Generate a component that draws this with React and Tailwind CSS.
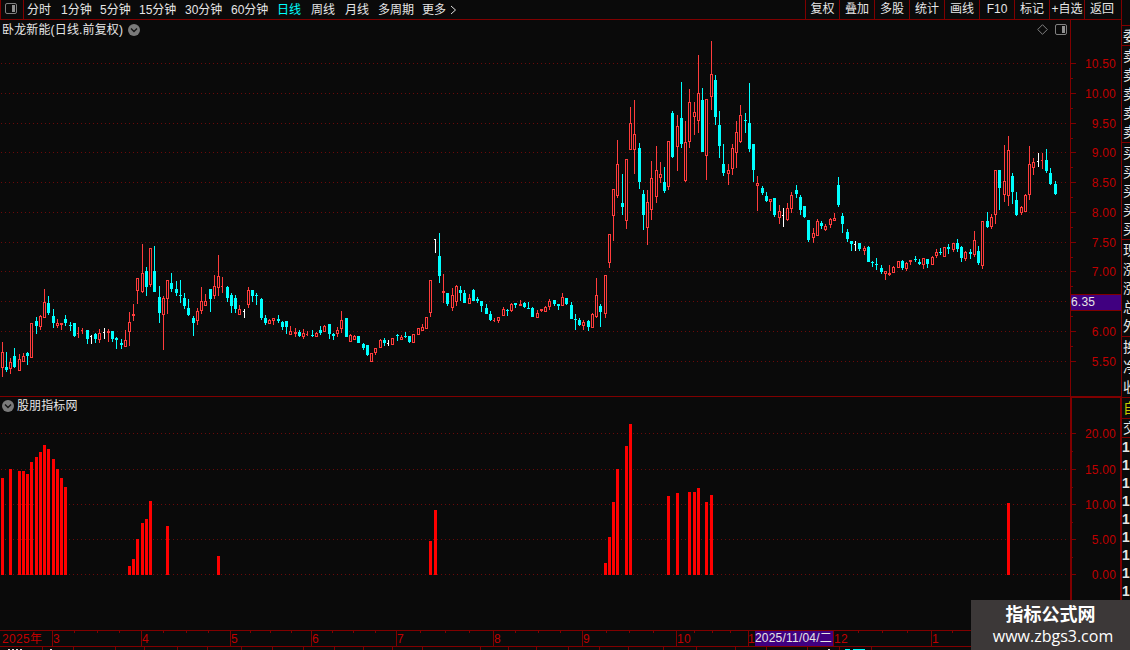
import React from 'react';
import clsx from 'clsx';

const LINE = '#800000';
const LABEL = '#c00000';
const COLORS = { r: '#ff3c3c', c: '#00ffff', w: '#ffffff' };

// x, wick top, wick bottom, body top, body bottom, colour
const CANDLES = `
2 342 377 352 368 r|6 352 372 367 370 c|10 358 374 362 369 r|14 348 368 356 367 c|19 354 371 359 371 r
23 353 362 356 362 r|27 352 365 353 356 c|31 323 358 323 358 r|36 317 334 321 326 c|40 315 330 316 327 r
44 289 318 302 318 r|48 296 315 303 313 c|53 309 328 316 323 c|57 319 328 323 326 r|61 323 330 323 325 r
65 315 326 319 323 c|70 322 331 325 326 c|74 323 337 323 336 c|78 327 338 333 334 r|82 328 334 330 331 r
87 330 344 330 339 c|91 335 344 336 337 w|95 333 343 334 339 c|99 329 343 333 340 r|104 328 339 332 333 w
108 329 342 331 333 r|112 331 342 331 339 c|116 337 349 338 340 c|121 339 349 343 345 c|125 330 347 340 347 r
129 312 346 322 332 r|133 304 321 314 316 r|137 278 304 278 291 r|142 244 293 273 292 r|146 267 296 271 287 c
150 248 287 248 285 r|154 246 292 271 292 c|159 286 323 297 313 c|163 296 350 298 315 r|167 280 314 280 299 r
171 273 292 283 289 c|176 281 296 289 293 c|180 280 303 295 296 c|184 293 309 298 306 c|188 299 316 308 315 c
193 316 336 318 323 c|197 308 325 311 321 r|201 287 314 301 311 r|205 294 306 301 306 r|210 289 312 289 299 c
214 275 299 286 296 r|218 255 296 276 288 r|222 277 293 286 287 r|227 286 302 287 298 c|231 293 313 295 306 c
235 295 313 298 309 c|239 305 315 309 315 r|244 309 318 311 312 w|248 287 308 290 305 r|252 290 302 290 296 c
256 293 305 295 296 c|261 298 320 299 318 c|265 315 325 318 323 c|269 319 324 320 324 r|273 318 325 318 321 r
278 315 323 319 321 c|282 321 330 322 327 c|286 321 334 321 327 c|290 326 335 331 335 r|295 328 337 332 334 r
299 330 337 332 336 c|303 329 339 333 337 r|307 331 336 334 335 r|312 330 337 335 336 c|316 332 337 333 337 r
320 326 335 330 333 c|324 325 332 326 332 r|329 324 339 324 334 c|333 333 340 334 336 c|337 327 337 330 334 r
341 311 333 320 329 r|346 318 337 318 337 c|350 334 342 335 342 r|354 335 340 336 340 r|358 336 343 336 343 c
363 343 350 344 348 c|367 345 356 345 355 c|371 353 362 353 362 r|375 348 355 348 353 r|380 339 348 340 348 r
384 338 346 340 343 c|388 340 346 343 344 w|392 338 345 338 345 r|397 334 341 335 336 c|401 335 340 337 340 r
405 332 338 336 337 c|409 336 343 336 342 c|413 334 343 334 343 r|418 328 335 328 335 r|422 324 331 327 331 r
426 317 329 317 329 r|430 280 317 280 313 r|435 239 253 239 240 w|439 233 283 256 276 c|443 274 303 291 293 r
447 293 306 293 304 c|452 288 311 295 308 r|456 285 306 286 302 r|460 286 301 290 293 c|464 290 303 293 303 c
469 294 304 298 304 r|473 289 301 290 301 c|477 297 303 299 301 c|481 301 312 301 306 c|486 304 314 308 314 c
490 311 321 314 320 c|494 318 322 320 321 r|498 317 323 317 321 r|503 307 316 309 316 r|507 309 316 310 311 c
511 303 312 304 311 r|515 303 308 303 305 c|520 300 306 304 306 r|524 302 308 303 307 c|528 302 309 308 309 c
532 307 317 308 317 c|537 310 318 313 318 r|541 309 312 309 311 r|545 306 312 307 312 r|549 299 310 301 307 r
554 300 306 300 304 c|558 304 310 304 306 c|562 293 306 297 306 r|566 298 305 298 304 c|571 302 319 305 319 c
575 314 330 319 320 c|579 318 326 320 325 c|583 320 330 322 326 r|588 320 331 321 327 c|592 313 328 314 328 r
596 278 318 295 317 r|600 304 327 306 312 c|605 275 318 275 314 r|609 234 268 234 263 r|613 189 241 189 216 r
617 140 198 164 196 r|622 174 215 203 207 c|626 159 229 159 221 r|630 107 150 123 150 r|634 100 174 134 150 r
639 143 189 148 182 c|643 190 230 194 215 c|647 190 245 202 228 r|651 161 220 178 210 r|656 146 203 170 197 r
660 162 183 174 178 r|664 167 193 182 191 c|668 141 190 141 187 r|672 111 158 113 157 c|677 115 171 126 147 r
681 82 148 118 144 c|685 121 182 142 181 r|689 89 148 102 142 r|694 102 135 112 117 r|698 55 133 93 121 r
702 88 152 100 152 c|706 99 180 99 156 r|711 41 110 74 97 r|715 75 125 80 117 c|719 111 158 125 146 c
723 144 176 164 173 c|728 164 185 170 174 r|732 144 175 148 169 r|736 121 168 132 153 r|740 105 143 115 142 r
745 113 133 120 121 c|749 83 152 123 149 c|753 144 182 144 170 c|757 176 211 183 186 r|762 186 195 188 193 c
766 192 202 196 201 c|770 199 211 199 202 r|774 198 217 198 215 c|779 205 224 211 218 r|783 208 227 215 216 w
787 203 221 208 220 r|791 192 213 195 209 r|796 185 198 190 194 c|800 195 215 197 210 c|804 206 218 206 217 c
808 220 242 220 240 c|813 228 243 233 238 r|817 219 236 221 236 r|821 221 229 223 226 c|825 224 231 226 230 r
830 218 228 219 225 r|834 213 221 218 221 r|838 177 207 185 205 c|842 213 233 216 224 c|847 229 242 232 239 c
851 241 251 241 244 c|855 241 251 244 245 w|859 243 251 243 249 c|864 246 255 248 251 r|868 246 262 247 262 c
872 261 267 262 263 c|876 258 270 264 265 c|881 265 274 268 272 c|885 271 280 271 274 r|889 265 276 273 275 r
893 266 273 267 273 r|898 261 268 261 268 r|902 260 270 261 268 c|906 262 271 263 269 r|910 260 265 260 262 r
915 256 262 259 260 c|919 259 265 262 264 c|923 258 269 258 265 r|927 259 268 259 264 c|932 256 265 257 265 r
936 249 258 252 256 r|940 248 255 252 253 c|944 247 257 247 257 r|948 244 254 247 249 c|953 243 252 243 250 r
957 239 252 243 249 c|961 246 262 247 258 c|965 251 261 252 259 r|970 249 259 252 254 c|974 231 257 240 255 r
978 246 265 251 263 c|982 221 269 221 266 r|987 212 228 221 227 c|991 214 229 217 227 r|995 170 224 170 215 r
999 170 210 170 188 c|1004 145 202 181 195 r|1008 136 206 150 196 r|1012 173 204 176 192 c|1016 192 216 200 215 c
1021 206 215 207 213 r|1025 194 212 195 212 r|1029 146 200 164 195 r|1033 158 175 162 168 r|1038 153 167 161 162 w
1042 153 169 160 161 r|1046 149 173 160 171 c|1050 168 185 173 184 c|1055 181 195 184 194 c
`.trim().split(/[|\n]/).map((row) => {
  const [x, high, low, top, bottom, kind] = row.split(' ');
  return { x: +x, high: +high, low: +low, top: +top, bottom: +bottom, kind };
});

const BARS = [
  [2, 478], [10, 469], [19, 471], [23, 471], [27, 474], [31, 462], [36, 457], [40, 452], [44, 445], [48, 449],
  [53, 459], [57, 469], [61, 478], [65, 487], [129, 566], [133, 559], [137, 539], [142, 523], [146, 519],
  [150, 501], [167, 526], [218, 556], [430, 541], [435, 510], [605, 563], [609, 537], [613, 502], [617, 469],
  [626, 446], [630, 424], [668, 496], [677, 493], [689, 492], [694, 492], [698, 488], [706, 502], [711, 495],
  [1008, 503],
];

const PRICES = [
  [63, '10.50'], [93, '10.00'], [123, '9.50'], [152, '9.00'], [182, '8.50'], [212, '8.00'],
  [242, '7.50'], [271, '7.00'], [301, null], [331, '6.00'], [361, '5.50'],
];
const VALUES = [[433, '20.00'], [469, '15.00'], [504, '10.00'], [539, '5.00'], [574, '0.00']];

// the November label is mostly hidden by the cursor date, only its first digit shows
const MONTHS = [
  [52, '3'], [141, '4'], [230, '5'], [311, '6'], [396, '7'], [493, '8'], [582, '9'], [676, '10'],
  [748, '1'], [833, '12'], [931, '1'],
];
const WEEKS = [
  74, 97, 119, 163, 186, 208, 250, 270, 291, 332, 353, 375, 420, 445, 469, 515, 538, 560, 606, 629, 653,
  694, 712, 730, 858, 882, 907, 952,
];
const FOOTER = [
  42, 73, 115, 144, 177, 207, 241, 272, 303, 334, 363, 392, 422, 480, 508, 536, 568, 599, 628, 663, 696,
  735, 766, 807, 839, 871,
];

const PERIODS = [
  ['分时', 'w-[34px]'], ['1分钟', 'w-[39px]'], ['5分钟', 'w-[39px]'], ['15分钟', 'w-[46px]'],
  ['30分钟', 'w-[46px]'], ['60分钟', 'w-[46px]'], ['日线', 'w-[34px]'], ['周线', 'w-[34px]'],
  ['月线', 'w-[33px]'], ['多周期', 'w-[44px]'], ['更多', 'w-[28px]'],
];
const TOOLS = ['复权', '叠加', '多股', '统计', '画线', 'F10', '标记', '+自选', '返回'];

const QUOTES = [
  { rows: ['委'], size: 'h-5' },
  { rows: ['卖', '卖', '卖', '卖', '卖'], size: 'h-[97px]' },
  { rows: ['买', '买', '买', '买', '买'], size: 'h-[97px]' },
  { rows: ['现', '涨', '涨', '总', '外'], size: 'h-[97px]' },
  { rows: ['换', '净', '收'], size: 'h-[61px]' },
  { rows: ['自'], size: 'h-[21px]', color: 'text-[#c8c800]' },
  { rows: ['交'], size: 'h-[19px]' },
];

const PanelIcon = ({ className }) => (
  <svg className={className} width="12" height="11" viewBox="0 0 12 11" fill="none">
    <rect x="0.5" y="0.5" width="11" height="10" rx="1.5" stroke="#808080" />
    <rect x="7" y="2" width="3" height="7" fill="#909090" />
  </svg>
);

const CollapseIcon = () => (
  <svg width="12" height="12" viewBox="0 0 12 12" fill="none">
    <circle cx="6" cy="6" r="6" fill="#7a7a7a" />
    <path d="M3 4.5L6 7.5L9 4.5" stroke="#141414" strokeWidth="1.4" />
  </svg>
);

const GridRow = ({ y }) => (
  <path d={`M1 ${y + 0.5}H1067`} stroke="#6c0a0a" strokeDasharray="1 3" />
);

const Candle = ({ x, high, low, top, bottom, kind }) => {
  const color = COLORS[kind];
  const height = bottom - top;
  const hollow = kind === 'r' && height > 2;
  const tick = kind !== 'c' && height === 1;

  return (
    <g fill={color}>
      <rect x={x} y={high} width="1" height={low - high} />
      <rect x={x - 1} y={top} width={tick ? 2 : 3} height={height} />
      {hollow && <rect x={x} y={top + 1} width="1" height={height - 2} fill="#0a0a0a" />}
    </g>
  );
};

const Scale = ({ rows, left, top, height }) => (
  <svg width={1120 - left} height={height} viewBox={`${left} ${top} ${1120 - left} ${height}`} shapeRendering="crispEdges">
    {rows.map(([y, label], i) => (
      <g key={y}>
        <rect x="1071" y={y} width="5" height="1" fill={LINE} />
        {i < rows.length - 1 && (
          <rect x="1071" y={Math.round((y + rows[i + 1][0]) / 2)} width="2" height="1" fill={LINE} />
        )}
        {label && (
          <text x="1116" y={y + 5} textAnchor="end" fontSize="12" letterSpacing="0.2" fill={LABEL}>{label}</text>
        )}
      </g>
    ))}
  </svg>
);

const TopBar = () => (
  <div className="flex h-5 border-b border-[#800000]">
    <div className="flex w-6 border-x border-[#800000] pl-1 pt-[3px]">
      <PanelIcon />
    </div>
    <div className="flex flex-1 items-center pl-[3px] leading-[18px]">
      {PERIODS.map(([name, width]) => (
        <span key={name} className={clsx(width, name === '日线' && 'text-[#00ffff]')}>{name}</span>
      ))}
      <svg width="7" height="10" viewBox="0 0 7 10" fill="none">
        <path d="M1 1L5.5 5L1 9" stroke="#e0e0e0" />
      </svg>
    </div>
    <div className="flex w-[316px] leading-[19px]">
      {TOOLS.map((name) => (
        <span key={name} className="w-[35px] whitespace-nowrap border-l border-[#800000] text-center first:w-[34px]">{name}</span>
      ))}
    </div>
  </div>
);

const PricePanel = () => (
  <div className="flex h-[377px] border-b border-[#800000]">
    <div className="relative w-[1070px]">
      <svg width="1070" height="376" viewBox="0 20 1070 376" shapeRendering="crispEdges">
        {PRICES.map(([y]) => <GridRow key={y} y={y} />)}
        {CANDLES.map((c) => <Candle key={c.x} {...c} />)}
      </svg>
      <div className="absolute inset-x-0 top-0 flex h-[19px] items-center pl-[2px] pr-[3px]">
        <span className="w-[126px] tracking-[0.15px]">卧龙新能(日线.前复权)</span>
        <CollapseIcon />
        <svg className="ml-auto mr-[7px]" width="11" height="11" viewBox="0 0 11 11" fill="none">
          <path d="M5.5 0.7L10.3 5.5L5.5 10.3L0.7 5.5Z" stroke="#808080" />
        </svg>
        <PanelIcon />
      </div>
    </div>
    <div className="relative w-[51px] border-l border-[#800000]">
      <Scale rows={PRICES} left={1071} top={20} height={376} />
      <div className="absolute left-0 top-[274px] h-[17px] w-[50px] border-y border-[#800000] bg-[#400080] text-[12px] leading-[15px] tracking-[0.2px]">
        6.35
      </div>
    </div>
  </div>
);

const IndicatorPanel = () => (
  <div className="flex h-[233px]">
    <div className="relative w-[1070px]">
      <svg width="1070" height="233" viewBox="0 397 1070 233" shapeRendering="crispEdges">
        {VALUES.map(([y]) => <GridRow key={y} y={y} />)}
        {BARS.map(([x, y]) => (
          <rect key={x} x={x - 1} y={y} width="3" height={575 - y} fill="#ff0000" />
        ))}
      </svg>
      <div className="absolute left-[2px] top-0 flex h-[17px] items-center gap-[3px]">
        <CollapseIcon />
        <span className="tracking-[0.1px]">股朋指标网</span>
      </div>
    </div>
    <div className="w-[51px] border-l-2 border-r border-t border-[#800000]">
      <Scale rows={VALUES} left={1072} top={398} height={232} />
    </div>
  </div>
);

const TimeAxis = () => (
  <div className="relative h-5">
    <svg width="1121" height="20" viewBox="0 630 1121 20" shapeRendering="crispEdges">
      <g fill={LINE}>
        <rect x="0" y="630" width="1121" height="1" />
        <rect x="0" y="646" width="1121" height="1" />
        {MONTHS.map(([x]) => <rect key={x} x={x} y="630" width="1" height="16" />)}
        {WEEKS.map((x) => <rect key={x} x={x} y="631" width="1" height="2" />)}
        {FOOTER.map((x) => <rect key={x} x={x} y="647" width="1" height="3" />)}
      </g>
      <g fill={LABEL} fontSize="12">
        <text x="2" y="643" letterSpacing="0.3">2025年</text>
        {MONTHS.map(([x, name]) => (
          <text key={x} x={x === 748 ? x : x + 1} y="643" letterSpacing="0.3">{name}</text>
        ))}
      </g>
      {/* top edge of the index ticker */}
      <path d="M8 649.5h2m2 0h2m2 0h2m2 0h2M50 649.5h2M828 649.5h2" stroke="#e0e0e0" />
      <path d="M845 649.5h5m3 0h12" stroke="#00ffff" />
    </svg>
    <div className="absolute left-[755px] top-[1px] h-[15px] w-[78px] whitespace-nowrap bg-[#400080] text-[12px] leading-[15px] tracking-[0.2px]">
      2025/11/04/二
    </div>
  </div>
);

const QuoteStrip = () => (
  <div className="flex w-[9px] flex-col overflow-hidden border-l border-[#800000] pt-[25px] text-[14px]">
    {QUOTES.map(({ rows, size, color }, i) => (
      <div key={i} className={clsx('flex shrink-0 flex-col justify-around border-t border-[#800000] pl-px', size, color)}>
        {rows.map((name, j) => <span key={j} className="w-4 leading-[18px]">{name}</span>)}
      </div>
    ))}
    <div className="flex flex-col border-t border-[#800000] font-bold">
      {Array.from({ length: 9 }, (_, i) => <span key={i} className="leading-[18px]">1</span>)}
    </div>
  </div>
);

const App = () => {
  return (
    <div className="relative flex h-[650px] w-[1130px] overflow-hidden bg-[#0a0a0a] font-['Liberation_Sans','Noto_Sans_CJK_SC',sans-serif] text-[12px] text-[#e6e6e6]">
      <div className="w-[1121px] shrink-0">
        <TopBar />
        <PricePanel />
        <IndicatorPanel />
        <TimeAxis />
      </div>
      <QuoteStrip />
      <div className="absolute bottom-0 right-0 flex h-[50px] w-[159px] flex-col items-center bg-[#3c3838] pt-[5px] text-white">
        <div className="text-[18px] font-bold leading-[21px]">指标公式网</div>
        <div className="pl-[5px] font-['Open_Sans',sans-serif] text-[16px] leading-[20px]">www.zbgs3.com</div>
      </div>
    </div>
  );
};

export default App;
